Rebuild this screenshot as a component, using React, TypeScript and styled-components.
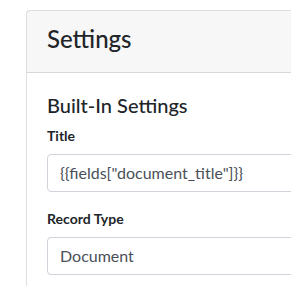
import React from "react";
import styled, { createGlobalStyle } from "styled-components";

const Global = createGlobalStyle`
  html, body { margin: 0; padding: 0; background: #fff; overflow: hidden; }
  body { font-family: Lato, "Segoe UI", sans-serif; color: #212529; }
  * { box-sizing: border-box; }
`;

const Page = styled.div`
  padding: 10px 0 0 26px;
  width: 291px;
  height: 286px;
  overflow: hidden;
`;

const Card = styled.div`
  width: 420px;
  border: 1px solid rgba(0, 0, 0, 0.125);
  border-radius: 4px;
  background: #fff;
`;

const CardHeader = styled.div`
  padding: 14px 20px 18px;
  background: rgba(0, 0, 0, 0.03);
  border-bottom: 1px solid rgba(0, 0, 0, 0.125);
`;

const HeaderTitle = styled.h4`
  margin: 0;
  font-size: 24px;
  font-weight: 500;
  line-height: 1.2;
`;

const CardBody = styled.div`
  padding: 20px;
`;

const SectionTitle = styled.h5`
  margin: 0 0 8px;
  font-size: 20px;
  font-weight: 500;
  line-height: 1.2;
`;

const FormGroup = styled.div`
  margin-bottom: 16px;
`;

const Label = styled.label`
  display: block;
  margin-bottom: 8px;
  font-size: 14px;
  font-weight: 700;
  line-height: 1.5;
`;

const Input = styled.input`
  display: block;
  width: 100%;
  height: 38px;
  padding: 6px 12px;
  font-family: inherit;
  font-size: 16px;
  line-height: 1.5;
  color: #495057;
  background: #fff;
  border: 1px solid #ced4da;
  border-radius: 4px;
  outline: none;
`;

export default function App() {
  return (
    <>
      <Global />
      <Page>
        <Card>
          <CardHeader>
            <HeaderTitle>Settings</HeaderTitle>
          </CardHeader>
          <CardBody>
            <SectionTitle>Built-In Settings</SectionTitle>
            <FormGroup>
              <Label>Title</Label>
              <Input readOnly value={'{{fields["document_title"]}}'} />
            </FormGroup>
            <FormGroup>
              <Label>Record Type</Label>
              <Input readOnly value="Document" />
            </FormGroup>
          </CardBody>
        </Card>
      </Page>
    </>
  );
}
